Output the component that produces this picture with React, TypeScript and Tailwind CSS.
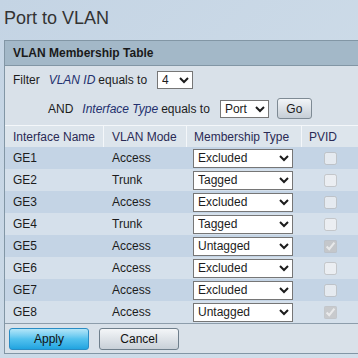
import React from "react";

const rows = [
  { name: "GE1", mode: "Access", type: "Excluded", pvid: false },
  { name: "GE2", mode: "Trunk", type: "Tagged", pvid: false },
  { name: "GE3", mode: "Access", type: "Excluded", pvid: false },
  { name: "GE4", mode: "Trunk", type: "Tagged", pvid: false },
  { name: "GE5", mode: "Access", type: "Untagged", pvid: true },
  { name: "GE6", mode: "Access", type: "Excluded", pvid: false },
  { name: "GE7", mode: "Access", type: "Excluded", pvid: false },
  { name: "GE8", mode: "Access", type: "Untagged", pvid: true },
];

export default function App() {
  return (
    <div
      className="w-[358px] h-[358px] overflow-hidden bg-gradient-to-br from-[#c4d4e4] to-[#d2dfea] text-[12px] text-[#1c1c1c]"
      style={{ fontFamily: '"Liberation Sans", Arial, sans-serif' }}
    >
      <div className="pl-[4px] pt-[8px] h-[40px] text-[18px] leading-[21px] text-[#333]">Port to VLAN</div>
      <div className="ml-[4px] w-[354px] border-l border-t border-b border-[#8296a5] bg-[#d9e1e9]">
        <div className="h-[25px] bg-[#a3b8c8] border-b border-[#8296a5] flex items-center pl-[8px] font-bold text-[12px] text-[#1a1a1a]">
          VLAN Membership Table
        </div>
        <div className="flex items-center h-[18px] mt-[5px] pl-[8px]">
          <span>Filter</span>
          <span className="ml-[9px] italic text-[#23306e]">VLAN ID</span>
          <span className="ml-[3px]">equals to</span>
          <select className="ml-[10px] w-[36px] h-[18px] bg-white border border-[#767676] text-[12px]" defaultValue="4">
            <option>4</option>
          </select>
        </div>
        <div className="flex items-center h-[21px] mt-[9px] pl-[43px]">
          <span>AND</span>
          <span className="ml-[9px] italic text-[#23306e]">Interface Type</span>
          <span className="ml-[3px]">equals to</span>
          <select className="ml-[10px] w-[49px] h-[18px] bg-white border border-[#767676] text-[12px]" defaultValue="Port">
            <option>Port</option>
          </select>
          <button className="ml-[8px] w-[35px] h-[21px] rounded-[3px] border border-[#7e8a94] bg-gradient-to-b from-[#f2f5f8] to-[#c6ced6] text-[12px]">
            Go
          </button>
        </div>
        <div className="mt-[6px]">
          <div className="grid grid-cols-[99px_83px_115px_1fr] h-[22px] border-t border-[#f4f7fa] bg-[#dde5ec] text-[#2a2a55]">
            <div className="flex items-center pl-[8px] border-r border-[#f4f7fa]">Interface Name</div>
            <div className="flex items-center pl-[8px] border-r border-[#f4f7fa]">VLAN Mode</div>
            <div className="flex items-center pl-[7px] border-r border-[#f4f7fa]">Membership Type</div>
            <div className="flex items-center pl-[7px]">PVID</div>
          </div>
          {rows.map((r, i) => (
            <div
              key={r.name}
              className={
                "grid grid-cols-[99px_83px_115px_1fr] h-[22px] " +
                (i % 2 === 0 ? "bg-[#c4d4e5]" : "bg-[#d5e0eb]")
              }
            >
              <div className="flex items-center pl-[8px]">{r.name}</div>
              <div className="flex items-center pl-[8px]">{r.mode}</div>
              <div className="flex items-center pl-[6px]">
                <select
                  className="w-[100px] h-[19px] bg-white border border-[#767676] text-[12px]"
                  defaultValue={r.type}
                >
                  <option>Excluded</option>
                  <option>Tagged</option>
                  <option>Untagged</option>
                </select>
              </div>
              <div className="flex items-center pl-[22px]">
                <input type="checkbox" disabled defaultChecked={r.pvid} className="m-0 w-[13px] h-[13px]" />
              </div>
            </div>
          ))}
        </div>
        <div className="border-t border-[#8d9dab] flex items-center h-[30px] pl-[4px] pt-[0px]">
          <button className="w-[80px] h-[22px] rounded-[3px] border border-[#2a8cc4] bg-gradient-to-b from-[#b2e6f8] via-[#52c2ee] to-[#1fa4e0] text-[#111]">
            Apply
          </button>
          <button className="ml-[10px] w-[80px] h-[22px] rounded-[3px] border border-[#6f7f8c] bg-gradient-to-b from-[#f4f6f8] to-[#c8d0d8] text-[#111]">
            Cancel
          </button>
        </div>
      </div>
    </div>
  );
}
